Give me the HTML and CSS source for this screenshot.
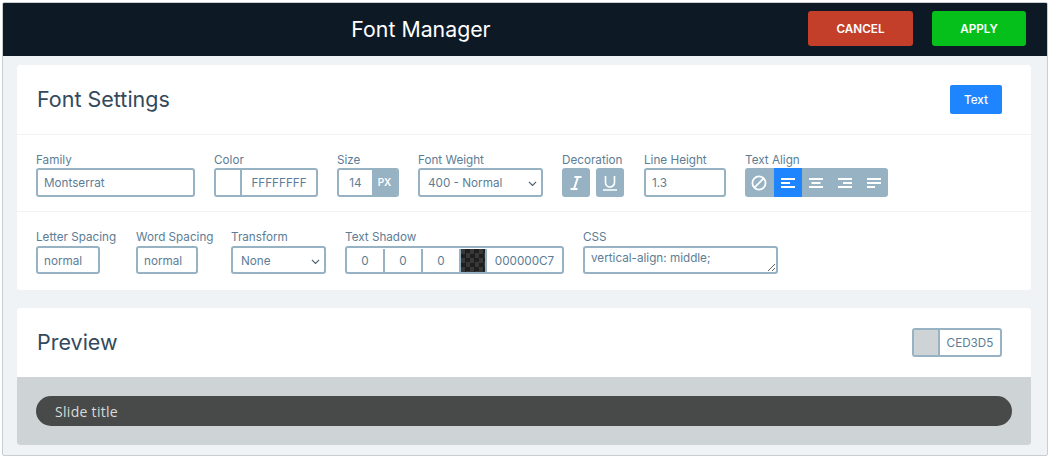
FILE: index.html
```html
<!DOCTYPE html>
<html lang="en">
<head>
    <meta charset="UTF-8">
    <meta name="viewport" content="width=device-width, initial-scale=1.0">
    <title>Font Manager</title>
    <link rel="stylesheet" href="styles.css">
</head>
<body>
    <div class="window">
        <div class="topbar">
            <h1>Font Manager</h1>
            <button class="top-btn cancel">CANCEL</button>
            <button class="top-btn apply">APPLY</button>
        </div>

        <div class="card settings">
            <div class="card-head">
                <h2>Font Settings</h2>
                <button class="text-btn">Text</button>
            </div>

            <div class="field-row first">
                <div class="field w-family">
                    <label>Family</label>
                    <input class="box" type="text" value="Montserrat">
                </div>
                <div class="field w-color">
                    <label>Color</label>
                    <div class="box group">
                        <span class="swatch white"></span>
                        <input class="hex" type="text" value="FFFFFFFF">
                    </div>
                </div>
                <div class="field w-size">
                    <label>Size</label>
                    <div class="box group">
                        <input class="num" type="text" value="14">
                        <span class="unit">PX</span>
                    </div>
                </div>
                <div class="field w-weight">
                    <label>Font Weight</label>
                    <div class="select-wrap">
                        <select class="box">
                            <option>400 - Normal</option>
                        </select>
                        <svg class="chevron" viewBox="0 0 10 6"><path d="M1 1l4 4 4-4" fill="none" stroke="#4d6272" stroke-width="1.3"/></svg>
                    </div>
                </div>
                <div class="field w-deco">
                    <label>Decoration</label>
                    <div class="deco">
                        <button class="icon-btn">
                            <svg viewBox="0 0 16 16"><path d="M6.5 2h7M2.5 14h7M10 2L6 14" fill="none" stroke="#fff" stroke-width="2"/></svg>
                        </button>
                        <button class="icon-btn">
                            <svg viewBox="0 0 16 16"><path d="M3.5 1v6.5a4.5 4.5 0 0 0 9 0V1M1 15h14" fill="none" stroke="#fff" stroke-width="1.6"/></svg>
                        </button>
                    </div>
                </div>
                <div class="field w-line">
                    <label>Line Height</label>
                    <input class="box" type="text" value="1.3">
                </div>
                <div class="field">
                    <label>Text Align</label>
                    <div class="align">
                        <button class="align-btn">
                            <svg viewBox="0 0 16 16"><circle cx="8" cy="8" r="6.6" fill="none" stroke="#fff" stroke-width="1.8"/><path d="M3.4 12.6l9.2-9.2" stroke="#fff" stroke-width="1.8"/></svg>
                        </button>
                        <button class="align-btn on">
                            <svg viewBox="0 0 16 16"><path d="M1 4h14M1 8h9M1 12h14" stroke="#fff" stroke-width="1.8"/></svg>
                        </button>
                        <button class="align-btn">
                            <svg viewBox="0 0 16 16"><path d="M1 4h14M3.5 8h9M1 12h14" stroke="#fff" stroke-width="1.8"/></svg>
                        </button>
                        <button class="align-btn">
                            <svg viewBox="0 0 16 16"><path d="M1 4h14M6 8h9M1 12h14" stroke="#fff" stroke-width="1.8"/></svg>
                        </button>
                        <button class="align-btn">
                            <svg viewBox="0 0 16 16"><path d="M1 4h14M1 8h14M1 12h8" stroke="#fff" stroke-width="1.8"/></svg>
                        </button>
                    </div>
                </div>
            </div>

            <div class="field-row second">
                <div class="field w-letter">
                    <label>Letter Spacing</label>
                    <input class="box letter-input" type="text" value="normal">
                </div>
                <div class="field w-word">
                    <label>Word Spacing</label>
                    <input class="box word-input" type="text" value="normal">
                </div>
                <div class="field w-transform">
                    <label>Transform</label>
                    <div class="select-wrap">
                        <select class="box">
                            <option>None</option>
                        </select>
                        <svg class="chevron" viewBox="0 0 10 6"><path d="M1 1l4 4 4-4" fill="none" stroke="#4d6272" stroke-width="1.3"/></svg>
                    </div>
                </div>
                <div class="field w-shadow">
                    <label>Text Shadow</label>
                    <div class="box group">
                        <input class="cell" type="text" value="0">
                        <input class="cell" type="text" value="0">
                        <input class="cell" type="text" value="0">
                        <span class="swatch checker"></span>
                        <input class="hex" type="text" value="000000C7">
                    </div>
                </div>
                <div class="field w-css">
                    <label>CSS</label>
                    <textarea class="box css">vertical-align: middle;</textarea>
                </div>
            </div>
        </div>

        <div class="card preview">
            <div class="card-head short">
                <h2>Preview</h2>
                <div class="box group bg-color">
                    <span class="swatch grey"></span>
                    <input class="hex" type="text" value="CED3D5">
                </div>
            </div>
            <div class="stage">
                <div class="pill">Slide title</div>
            </div>
        </div>
    </div>
</body>
</html>
```

FILE: styles.css
```css
* {
    margin: 0;
    padding: 0;
    box-sizing: border-box;
    font-family: "Inter", "Liberation Sans", sans-serif;
}

body {
    background-color: #fff;
    padding: 2px;
}

.window {
    width: 1046px;
    height: 454px;
    background-color: #eff3f6;
    border: 1px solid #c8ced3;
    border-radius: 2px;
    overflow: hidden;
}

.topbar {
    display: flex;
    align-items: center;
    gap: 19px;
    height: 53px;
    padding: 0 21px 2px 0;
    background-color: #0d1a26;
}

h1 {
    flex: 1;
    padding-left: 50px;
    text-align: center;
    color: #fff;
    font-size: 21.3px;
    font-weight: 400;
}

.top-btn {
    height: 35px;
    border: none;
    border-radius: 3px;
    color: #fff;
    font-size: 11.7px;
    font-weight: 600;
}

.cancel {
    width: 105px;
    background-color: #c43f2a;
}

.apply {
    width: 94px;
    background-color: #05c01a;
}

.card {
    width: 1014px;
    margin-left: 14px;
    background-color: #fff;
    border-radius: 3px;
    overflow: hidden;
}

.settings {
    height: 225px;
    margin-top: 9px;
}

.preview {
    height: 137px;
    margin-top: 18px;
}

.card-head {
    display: flex;
    align-items: center;
    justify-content: space-between;
    height: 70px;
    padding: 0 29px 0 20px;
    border-bottom: 1px solid #f1f3f5;
}

.card-head.short {
    height: 69px;
    border-bottom: none;
}

h2 {
    margin-bottom: 2px;
    color: #33495c;
    font-size: 21.5px;
    font-weight: 400;
}

.text-btn {
    width: 52px;
    height: 29px;
    border: none;
    border-radius: 2px;
    background-color: #1f85ff;
    color: #fff;
    font-size: 11.7px;
    font-weight: 500;
}

.field-row {
    display: flex;
    gap: 19px;
    padding-left: 19px;
}

.field-row.first {
    height: 77px;
    padding-top: 18px;
    border-bottom: 1px solid #f1f3f5;
}

.field-row.second {
    padding-top: 18px;
}

label {
    display: block;
    height: 15px;
    color: #5c7d95;
    font-size: 11.7px;
    line-height: 15px;
    white-space: nowrap;
}

.second label {
    margin-bottom: 1px;
}

.w-family { width: 159px; }
.w-color { width: 104px; }
.w-size { width: 62px; }
.w-weight { width: 125px; }
.w-deco { width: 63px; }
.w-line { width: 82px; }
.w-letter { width: 81px; }
.w-word { width: 76px; }
.w-transform { width: 95px; }
.w-shadow { width: 219px; }
.w-css { width: 195px; }

.box {
    display: block;
    width: 100%;
    height: 29px;
    padding: 0 6px;
    background-color: #fff;
    border: 2px solid #97b2c2;
    border-radius: 3px;
    color: #5c7d95;
    font-size: 11.7px;
    outline: none;
}

.letter-input {
    width: 64px;
}

.word-input {
    width: 62px;
}

.second .box {
    height: 28px;
    padding-top: 1px;
}

.group {
    display: flex;
    padding: 0;
    overflow: hidden;
}

.group input {
    min-width: 0;
    height: 100%;
    border: none;
    outline: none;
    background: none;
    color: #5c7d95;
    font-size: 11.7px;
    text-align: center;
}

.swatch {
    flex: none;
    width: 26px;
    border-right: 2px solid #97b2c2;
}

.swatch.white {
    background-color: #fff;
}

.swatch.grey {
    background-color: #ced3d5;
}

.swatch.checker {
    background: repeating-conic-gradient(#1f1f1f 0 25%, #383838 0 50%) 0 0 / 9px 9px;
}

.hex {
    flex: 1;
    width: 100%;
}

.num {
    width: 33px;
}

.unit {
    flex: 1;
    background-color: #97b2c2;
    color: #fff;
    font-size: 10px;
    font-weight: 600;
    line-height: 25px;
    text-align: center;
}

.group .cell {
    width: 38px;
    border-right: 2px solid #97b2c2;
}

.select-wrap {
    position: relative;
}

select.box {
    appearance: none;
    padding-left: 8px;
}

.chevron {
    position: absolute;
    right: 6px;
    top: 13px;
    width: 9px;
    height: 5.4px;
}

.deco {
    display: flex;
    gap: 6px;
}

.icon-btn {
    display: flex;
    align-items: center;
    justify-content: center;
    width: 28px;
    height: 29px;
    border: none;
    border-radius: 3px;
    background-color: #97b2c2;
}

.icon-btn svg {
    width: 16px;
    height: 16px;
}

.align {
    display: flex;
    border-radius: 3px;
    overflow: hidden;
}

.align-btn {
    display: flex;
    align-items: center;
    justify-content: center;
    width: 28.6px;
    height: 29px;
    border: none;
    background-color: #97b2c2;
}

.align-btn svg {
    width: 16px;
    height: 16px;
}

.align-btn.on {
    background-color: #1f85ff;
}

.second .css {
    padding: 3px 6px;
    font-size: 11.7px;
    line-height: 15px;
}

.bg-color {
    width: 90px;
    height: 29px;
}

.stage {
    display: flex;
    align-items: center;
    height: 68px;
    padding: 0 19px;
    background-color: #ced3d5;
}

.pill {
    width: 100%;
    height: 30px;
    padding-left: 19px;
    background-color: #484a49;
    border-radius: 15px;
    color: #d8dbdb;
    font-family: "Open Sans", sans-serif;
    font-size: 14px;
    letter-spacing: 0.3px;
    line-height: 31px;
}
```
